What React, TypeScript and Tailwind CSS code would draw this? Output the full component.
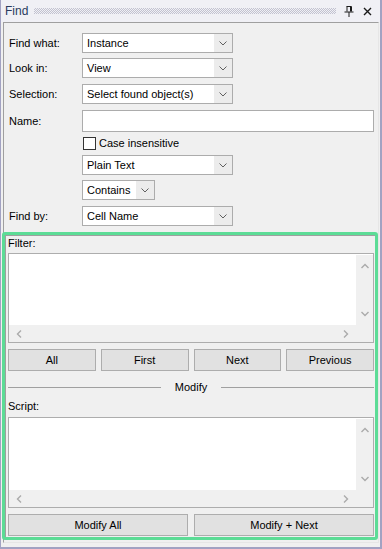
import React from 'react'

const font = { fontFamily: '"Liberation Sans", Arial, sans-serif' }

function Chevron({ className = '' }: { className?: string }) {
  return (
    <svg width="8" height="5" viewBox="0 0 8 5" className={className}>
      <path d="M0.5 0.5 L4 4 L7.5 0.5" fill="none" stroke="#606060" strokeWidth="1" />
    </svg>
  )
}

function Arrow({ dir }: { dir: 'up' | 'down' | 'left' | 'right' }) {
  const d = {
    up: 'M0.5 5 L4 1.5 L7.5 5',
    down: 'M0.5 1 L4 4.5 L7.5 1',
    left: 'M5 0.5 L1.5 4 L5 7.5',
    right: 'M1 0.5 L4.5 4 L1 7.5',
  }[dir]
  const vertical = dir === 'up' || dir === 'down'
  return (
    <svg width={vertical ? 8 : 6} height={vertical ? 6 : 8} viewBox={vertical ? '0 0 8 6' : '0 0 6 8'}>
      <path d={d} fill="none" stroke="#ababab" strokeWidth="1.4" />
    </svg>
  )
}

function Combo({ value, width = 'w-[151px]' }: { value: string; width?: string }) {
  return (
    <div className={`${width} h-[20px] flex border border-[#acacac] bg-[#ececec]`}>
      <div className="flex-1 bg-white flex items-center pl-[4px] text-[11px] text-black leading-none">{value}</div>
      <div className="w-[18px] flex items-center justify-center">
        <Chevron />
      </div>
    </div>
  )
}

function Row({ label, children, className = '' }: { label?: string; children: React.ReactNode; className?: string }) {
  return (
    <div className={`flex items-center ${className}`}>
      <div className="w-[73px] text-[11px] leading-none text-black">{label}</div>
      {children}
    </div>
  )
}

function ScrollBox({ height }: { height: string }) {
  return (
    <div className={`${height} border border-[#adadad] bg-white flex flex-col`}>
      <div className="flex-1 flex">
        <div className="flex-1 bg-white" />
        <div className="w-[17px] mt-px bg-[#f0f0f0] flex flex-col items-center justify-between py-[8px]">
          <Arrow dir="up" />
          <Arrow dir="down" />
        </div>
      </div>
      <div className="h-[17px] flex bg-[#f0f0f0]">
        <div className="flex-1 flex items-center justify-between px-[7px]">
          <Arrow dir="left" />
          <Arrow dir="right" />
        </div>
        <div className="w-[17px]" />
      </div>
    </div>
  )
}

function Btn({ label }: { label: string }) {
  return (
    <div className="flex-1 h-[22px] border border-[#adadad] bg-[#e1e1e1] flex items-center justify-center text-[11px] text-black">
      {label}
    </div>
  )
}

export default function App() {
  return (
    <div style={font} className="w-[382px] h-[549px] flex flex-col bg-[#f0f0f0] border-l border-r-2 border-b-2 border-[#a2a2c2]">
      {/* title bar */}
      <div className="h-[22px] flex items-center bg-[#f0f0f5] pl-[4px] pr-[8px]">
        <span className="text-[12px] text-[#2a3b5e] leading-none">Find</span>
        <div className="flex-1 ml-[6px] mr-[4px] h-[6px] bg-[conic-gradient(#c2c2d0_25%,transparent_0_50%,#c2c2d0_0_75%,transparent_0)] bg-[length:2px_2px]" />
        <svg width="10" height="11" viewBox="0 0 10 11" className="mx-[4px]">
          <path d="M3 0.5 V5.5 M6.5 0.5 V5.5 M7.5 0.5 V5.5 M2.5 0.5 H7.5 M0.5 6 H9.5 M5 6 V11" fill="none" stroke="#1a1a1a" strokeWidth="1" />
        </svg>
        <svg width="9" height="9" viewBox="0 0 9 9" className="ml-[5px]">
          <path d="M1 1 L8 8 M8 1 L1 8" fill="none" stroke="#1a1a1a" strokeWidth="1.4" />
        </svg>
      </div>

      {/* content panel */}
      <div className="flex-1 ml-[2px] mr-[1px] mb-[4px] border-l border-t border-[#9f9f9f] border-r border-b border-r-[#e6e6e6] border-b-[#e6e6e6] flex flex-col pt-[10px]">
        <div className="pl-[5px] flex flex-col">
          <Row label="Find what:">
            <Combo value="Instance" />
          </Row>
          <Row label="Look in:" className="mt-[5px]">
            <Combo value="View" />
          </Row>
          <Row label="Selection:" className="mt-[6px]">
            <Combo value="Select found object(s)" />
          </Row>
          <Row label="Name:" className="mt-[6px]">
            <div className="w-[292px] h-[22px] border border-[#acacac] bg-white" />
          </Row>
          <Row className="mt-[5px] h-[13px]">
            <div className="w-[13px] h-[13px] border border-[#333333] bg-white ml-px" />
            <span className="ml-[3px] text-[11px] leading-none text-black">Case insensitive</span>
          </Row>
          <Row className="mt-[5px]">
            <Combo value="Plain Text" />
          </Row>
          <Row className="mt-[5px]">
            <Combo value="Contains" width="w-[73px]" />
          </Row>
          <Row label="Find by:" className="mt-[6px]">
            <Combo value="Cell Name" />
          </Row>
        </div>

        {/* lower group */}
        <div className="mt-[6px] -ml-[2px] border-[3px] border-[#5cdc96] rounded-[3px]">
          <div className="border-l border-t border-[#9f9f9f] pl-[2px] pr-[1px] pb-px">
            <div className="h-[14px] flex items-center text-[11px] text-black">Filter:</div>
            <div className="mt-[3px]">
              <ScrollBox height="h-[90px]" />
            </div>
            <div className="mt-[6px] flex gap-[5px]">
              <Btn label="All" />
              <Btn label="First" />
              <Btn label="Next" />
              <Btn label="Previous" />
            </div>
            <div className="mt-[9px] h-[14px] flex items-center">
              <div className="flex-1 h-px bg-[#a0a0a0]" />
              <span className="px-[14px] text-[11px] text-black">Modify</span>
              <div className="flex-1 h-px bg-[#a0a0a0]" />
            </div>
            <div className="mt-[5px] h-[14px] flex items-center text-[11px] text-black">Script:</div>
            <div className="mt-[4px]">
              <ScrollBox height="h-[91px]" />
            </div>
            <div className="mt-[6px] flex gap-[6px]">
              <Btn label="Modify All" />
              <Btn label="Modify + Next" />
            </div>
          </div>
        </div>
      </div>
    </div>
  )
}
